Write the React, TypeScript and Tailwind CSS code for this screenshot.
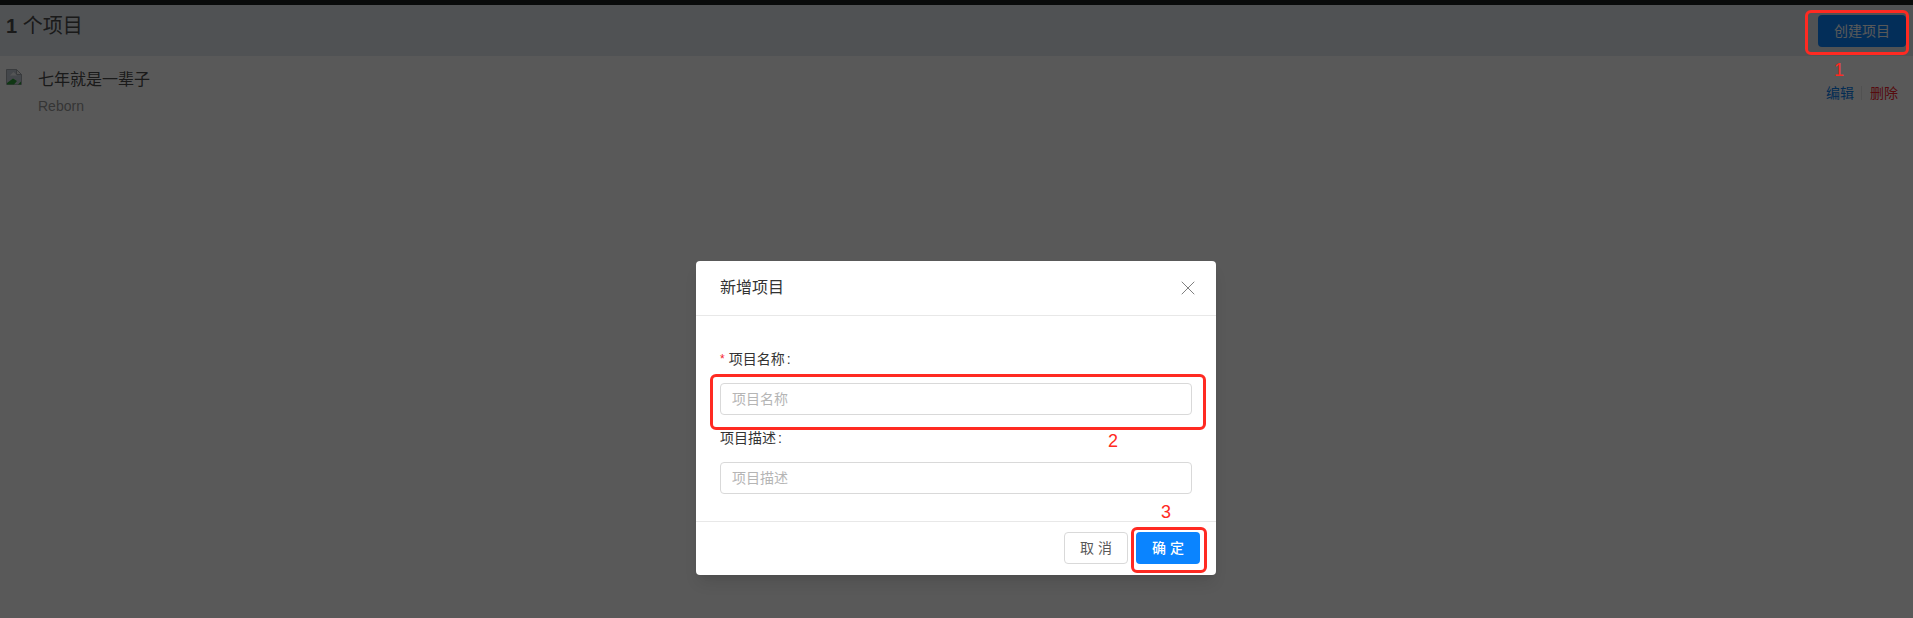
import { X } from 'lucide-react';

const fontStack = "font-['Liberation_Sans','Noto_Sans_CJK_SC',sans-serif]";

function BrokenImage() {
  return (
    <svg width="16" height="16" viewBox="0 0 16 16" className="shrink-0">
      <path d="M0.5 0.5H10.5L15.5 5.5V15.5H0.5Z" fill="#c4ccd6" stroke="#a3a8ae" />
      <path d="M10.5 0.5V5.5H15.5Z" fill="#f2f2f2" stroke="#a3a8ae" />
      <path d="M4 6.5L7.5 3L11 6.5Z" fill="#f4f6f8" />
      <path d="M1 15.5V14L7 9.5L11 12L8 15.5Z" fill="#2f9e3a" />
      <path d="M12 15.5L15 12.5V15.5Z" fill="#2f9e3a" />
    </svg>
  );
}

function Field({ label, required, placeholder }: { label: string; required?: boolean; placeholder: string }) {
  return (
    <div>
      <div className="flex h-10 items-center text-sm text-[#333]">
        {required && <span className="mr-1 text-xs text-[#f5222d]">*</span>}
        <span>{label}</span>
        <span className="ml-0.5">:</span>
      </div>
      <input
        readOnly
        placeholder={placeholder}
        className="mt-1 block h-8 w-full rounded border border-[#d9d9d9] bg-white px-[11px] text-sm outline-none placeholder:text-[#b5b5b5]"
      />
    </div>
  );
}

export default function App() {
  return (
    <div className={`${fontStack} relative h-[618px] overflow-hidden bg-white text-[#333]`}>
      <div className="h-[5px] bg-[#1c2022]" />
      <div className="flex h-[51px] items-start justify-between bg-[#e5eaf0] pl-1.5 pr-[7px]">
        <h1 className="mt-[5px] text-xl leading-[32px] text-[#4a4a4a]">
          <b>1</b> 个项目
        </h1>
        <button className="mt-2.5 h-8 w-[88px] rounded bg-[#0a84ff] text-sm text-white">创建项目</button>
      </div>
      <div className="flex items-start justify-between pl-1.5 pr-[15px] pt-[13px]">
        <div className="flex gap-4">
          <BrokenImage />
          <div className="mt-px">
            <p className="text-base leading-[20px] text-[#4a4a4a]">七年就是一辈子</p>
            <p className="mt-1.5 text-sm leading-[20px] text-[#999]">Reborn</p>
          </div>
        </div>
        <div className="mt-[14px] flex items-center text-sm leading-[20px]">
          <a className="text-[#0a7fee]">编辑</a>
          <span className="ml-[7px] mr-2 h-3.5 w-px bg-[#e8e8e8]" />
          <a className="text-[#f5222d]">删除</a>
        </div>
      </div>

      {/* mask + modal */}
      <div className="absolute inset-0 flex justify-center bg-black/65 pr-px pt-[261px]">
        <div className="h-[314px] w-[520px] rounded bg-white shadow-lg">
          <div className="flex h-[55px] items-center justify-between border-b border-[#e8e8e8] pl-6 pr-4">
            <span className="text-base text-[#333]">新增项目</span>
            <X size={24} strokeWidth={1} className="text-[#808080]" />
          </div>
          <div className="flex h-[206px] flex-col gap-[3px] border-b border-[#e8e8e8] px-6 pt-[23px]">
            <Field label="项目名称" required placeholder="项目名称" />
            <Field label="项目描述" placeholder="项目描述" />
          </div>
          <div className="flex justify-end gap-2 px-4 pt-2.5">
            <button className="h-8 w-16 rounded border border-[#d9d9d9] bg-white pl-1 text-sm tracking-[4px] text-[#595959]">取消</button>
            <button className="h-8 w-16 rounded bg-[#0a84ff] pl-1 text-sm font-medium tracking-[4px] text-white">确定</button>
          </div>
        </div>
      </div>

      {/* red annotations */}
      <div className="absolute left-[1805px] top-[10px] h-[45px] w-[104px] rounded-md border-[3px] border-[#ff2a22]" />
      <div className="absolute left-[710px] top-[374px] h-[56px] w-[496px] rounded-md border-[3px] border-[#ff2a22]" />
      <div className="absolute left-[1131px] top-[527px] h-[46px] w-[76px] rounded-md border-[3px] border-[#ff2a22]" />
      <span className="absolute left-[1834px] top-[59px] text-lg leading-[22px] text-[#ff2a22]">1</span>
      <span className="absolute left-[1108px] top-[430px] text-lg leading-[22px] text-[#ff2a22]">2</span>
      <span className="absolute left-[1161px] top-[501px] text-lg leading-[22px] text-[#ff2a22]">3</span>
    </div>
  );
}
